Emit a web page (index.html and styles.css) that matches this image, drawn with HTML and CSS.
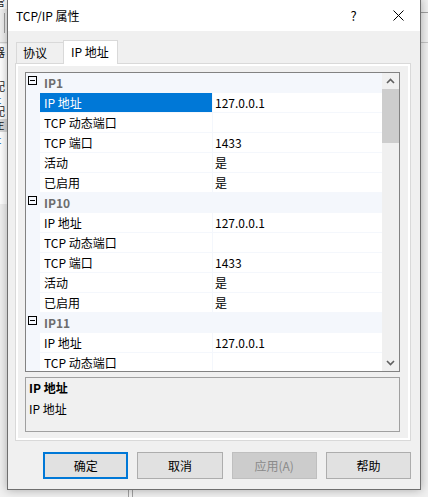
FILE: index.html
```html
<!DOCTYPE html>
<html lang="zh-CN">
<head>
<meta charset="utf-8">
<title>TCP/IP 属性</title>
<link rel="stylesheet" href="styles.css">
</head>
<body>
<div class="desktop">
  <!-- window behind the dialog -->
  <div class="behind">
    <div class="behind-top"><span class="frag frag-top">管</span></div>
    <div class="behind-toolbar"><span class="tb-sep"></span></div>
    <div class="behind-tree">
      <span class="frag" style="top:3px">器</span>
      <span class="frag" style="top:37px">配</span>
      <span class="frag frag-blue" style="top:50px">t</span>
      <span class="frag" style="top:62px">配</span>
      <span class="tree-hl"><span class="frag frag-hl">E</span></span>
      <span class="frag frag-blue" style="top:90px">t</span>
    </div>
    <span class="behind-hline h1"></span>
    <span class="behind-hline h2"></span>
    <span class="behind-vline v1"></span>
    <span class="behind-vline v2"></span>
  </div>

  <div class="dialog">
    <div class="titlebar">
      <span class="title">TCP/IP 属性</span>
      <span class="cap-btn help">?</span>
      <span class="cap-btn close">
        <svg width="11" height="11" viewBox="0 0 11 11"><path d="M0.5 0.5L10.5 10.5M10.5 0.5L0.5 10.5" stroke="#000" stroke-width="1" fill="none"/></svg>
      </span>
    </div>

    <div class="body">
      <div class="tabs">
        <div class="tab">协议</div>
        <div class="tab active">IP 地址</div>
      </div>

      <div class="panel">
        <div class="host">
          <div class="grid">
            <div class="rows">
              <div class="cat"><span class="toggle"></span><span class="cat-label">IP1</span></div>
              <div class="prop selected"><span class="gutter"></span><span class="name">IP 地址</span><span class="value">127.0.0.1</span></div>
              <div class="prop"><span class="gutter"></span><span class="name">TCP 动态端口</span><span class="value"></span></div>
              <div class="prop"><span class="gutter"></span><span class="name">TCP 端口</span><span class="value">1433</span></div>
              <div class="prop"><span class="gutter"></span><span class="name">活动</span><span class="value">是</span></div>
              <div class="prop"><span class="gutter"></span><span class="name">已启用</span><span class="value">是</span></div>

              <div class="cat"><span class="toggle"></span><span class="cat-label">IP10</span></div>
              <div class="prop"><span class="gutter"></span><span class="name">IP 地址</span><span class="value">127.0.0.1</span></div>
              <div class="prop"><span class="gutter"></span><span class="name">TCP 动态端口</span><span class="value"></span></div>
              <div class="prop"><span class="gutter"></span><span class="name">TCP 端口</span><span class="value">1433</span></div>
              <div class="prop"><span class="gutter"></span><span class="name">活动</span><span class="value">是</span></div>
              <div class="prop"><span class="gutter"></span><span class="name">已启用</span><span class="value">是</span></div>

              <div class="cat"><span class="toggle"></span><span class="cat-label">IP11</span></div>
              <div class="prop"><span class="gutter"></span><span class="name">IP 地址</span><span class="value">127.0.0.1</span></div>
              <div class="prop"><span class="gutter"></span><span class="name">TCP 动态端口</span><span class="value"></span></div>
              <div class="prop"><span class="gutter"></span><span class="name">TCP 端口</span><span class="value">1433</span></div>
            </div>
            <div class="scrollbar">
              <span class="sb-btn sb-up">
                <svg width="9" height="6" viewBox="0 0 9 6"><path d="M1 5L4.5 1.5L8 5" stroke="#606060" stroke-width="1.6" fill="none"/></svg>
              </span>
              <span class="sb-thumb"></span>
              <span class="sb-track"></span>
              <span class="sb-btn sb-down">
                <svg width="9" height="6" viewBox="0 0 9 6"><path d="M1 1L4.5 4.5L8 1" stroke="#606060" stroke-width="1.6" fill="none"/></svg>
              </span>
            </div>
          </div>

          <div class="desc">
            <div class="desc-title">IP 地址</div>
            <div class="desc-text">IP 地址</div>
          </div>
        </div>
      </div>

      <div class="buttons">
        <button class="btn default">确定</button>
        <button class="btn">取消</button>
        <button class="btn" disabled>应用(A)</button>
        <button class="btn">帮助</button>
      </div>
    </div>
  </div>
</div>
</body>
</html>
```

FILE: styles.css
```css
* {
  box-sizing: border-box;
}

html,
body {
  margin: 0;
  padding: 0;
}

body {
  width: 428px;
  height: 497px;
  overflow: hidden;
  background: #f0f0f0;
  font-family: "Noto Sans CJK SC", sans-serif;
  font-size: 12px;
  color: #000;
}

.desktop {
  position: relative;
  width: 428px;
  height: 497px;
  overflow: hidden;
  background: #f0f0f0;
}

/* ---- window behind ---- */
.behind {
  position: absolute;
  inset: 0;
}

.behind-top {
  position: absolute;
  left: 0;
  top: 0;
  width: 8px;
  height: 9px;
  background: #fff;
  overflow: hidden;
}

.frag {
  position: absolute;
  left: -6px;
  line-height: 11px;
  font-size: 11px;
  color: #1a1a1a;
}

.frag-top {
  top: -4px;
}

.frag-blue {
  left: -3px;
  color: #2a6fb8;
}

.behind-toolbar {
  position: absolute;
  left: 0;
  top: 9px;
  width: 8px;
  height: 34px;
  background: #f0f0f0;
  border-bottom: 1px solid #d0d0d0;
}

.tb-sep {
  position: absolute;
  left: 4px;
  top: 4px;
  width: 1px;
  height: 20px;
  background: #a0a0a0;
}

.behind-tree {
  position: absolute;
  left: 0;
  top: 44px;
  width: 8px;
  height: 160px;
  background: #fff;
  overflow: hidden;
}

.tree-hl {
  position: absolute;
  left: 0;
  top: 75px;
  width: 8px;
  height: 13px;
  background: #d9d9d9;
}

.frag-hl {
  top: 1px;
  left: -2px;
}

.behind-hline {
  position: absolute;
  left: 421px;
  width: 7px;
  height: 1px;
}

.h1 {
  top: 12px;
  background: #a0a0a0;
}

.h2 {
  top: 42px;
  background: #c4c4c4;
}

.behind-vline {
  position: absolute;
  top: 489px;
  width: 1px;
  height: 8px;
  background: #a0a0a0;
}

.v1 {
  left: 128px;
}

.v2 {
  left: 132px;
}

/* ---- dialog ---- */
.dialog {
  position: absolute;
  left: 7px;
  top: -1px;
  width: 414px;
  height: 491px;
  border: 1px solid #6f6f6f;
  background: #f0f0f0;
  box-shadow: 0 0 9px rgba(0, 0, 0, 0.3);
  display: flex;
  flex-direction: column;
}

.titlebar {
  flex: none;
  height: 31px;
  background: #fff;
  display: flex;
  align-items: center;
}

.title {
  flex: 1;
  padding-left: 8px;
  line-height: 31px;
}

.cap-btn {
  height: 31px;
  display: flex;
  align-items: center;
  justify-content: center;
}

.help {
  width: 45px;
  font-size: 13px;
}

.close {
  width: 44px;
}

.body {
  flex: 1;
  display: flex;
  flex-direction: column;
  padding: 9px 9px 0 7px;
}

/* ---- tabs ---- */
.tabs {
  flex: none;
  height: 23px;
  margin-left: 1px;
  display: flex;
  align-items: flex-end;
}

.tab {
  height: 21px;
  width: 48px;
  padding-left: 6px;
  line-height: 20px;
  border: 1px solid #d9d9d9;
  border-bottom: none;
  background: #f0f0f0;
}

.tab.active {
  position: relative;
  z-index: 1;
  height: 24px;
  width: 55px;
  margin-left: -1px;
  margin-bottom: -1px;
  padding-left: 7px;
  line-height: 22px;
  background: #fff;
}

.panel {
  flex: none;
  height: 378px;
  border: 1px solid #d9d9d9;
  background: #fff;
  padding: 2px;
}

.host {
  height: 100%;
  background: #f0f0f0;
  padding: 6px 8px 6px 7px;
  display: flex;
  flex-direction: column;
}

/* ---- property grid ---- */
.grid {
  flex: none;
  height: 300px;
  border: 1px solid #828282;
  background: #fff;
  display: flex;
  overflow: hidden;
}

.rows {
  flex: 1;
  overflow: hidden;
}

.cat {
  height: 20px;
  background: #f4f7fc;
  display: flex;
  align-items: flex-start;
}

.toggle {
  position: relative;
  flex: none;
  width: 9px;
  height: 9px;
  margin: 3px 0 0 2px;
  border: 1px solid #000;
}

.toggle::after {
  content: "";
  position: absolute;
  left: 1px;
  right: 1px;
  top: 3px;
  height: 1px;
  background: #000;
}

.cat-label {
  margin-left: 7px;
  line-height: 19px;
  font-weight: bold;
  color: #6d6d6d;
}

.prop {
  height: 20px;
  display: flex;
  border-bottom: 1px solid #f4f7fc;
}

.gutter {
  flex: none;
  width: 14px;
  background: #f4f7fc;
}

.name {
  flex: none;
  width: 173px;
  padding-left: 4px;
  line-height: 19px;
  border-right: 1px solid #f4f7fc;
  white-space: nowrap;
}

.prop.selected .name {
  background: #0078d7;
  color: #fff;
}

.value {
  flex: 1;
  padding-left: 2px;
  line-height: 19px;
}

.scrollbar {
  flex: none;
  width: 17px;
  background: #f0f0f0;
  display: flex;
  flex-direction: column;
}

.sb-btn {
  flex: none;
  display: flex;
  align-items: center;
  justify-content: center;
}

.sb-up {
  height: 16px;
}

.sb-down {
  height: 17px;
}

.sb-thumb {
  flex: none;
  height: 54px;
  background: #cdcdcd;
}

.sb-track {
  flex: 1;
}

/* ---- description ---- */
.desc {
  flex: none;
  margin-top: 5px;
  height: 55px;
  border: 1px solid #a0a0a0;
  background: #f0f0f0;
  padding: 0 3px;
}

.desc-title {
  line-height: 19px;
  font-weight: bold;
}

.desc-text {
  margin-top: 2px;
  line-height: 19px;
}

/* ---- buttons ---- */
.buttons {
  flex: none;
  display: flex;
  gap: 9px;
  margin-top: 11px;
  margin-left: 28px;
}

.btn {
  width: 86px;
  height: 27px;
  padding: 0;
  border: 1px solid #adadad;
  background: #e1e1e1;
  font-family: inherit;
  font-size: 12px;
  color: #000;
}

.btn.default {
  border: 2px solid #0078d7;
}

.btn:disabled {
  background: #cccccc;
  border-color: #bfbfbf;
  color: #8a8a8a;
}
```
